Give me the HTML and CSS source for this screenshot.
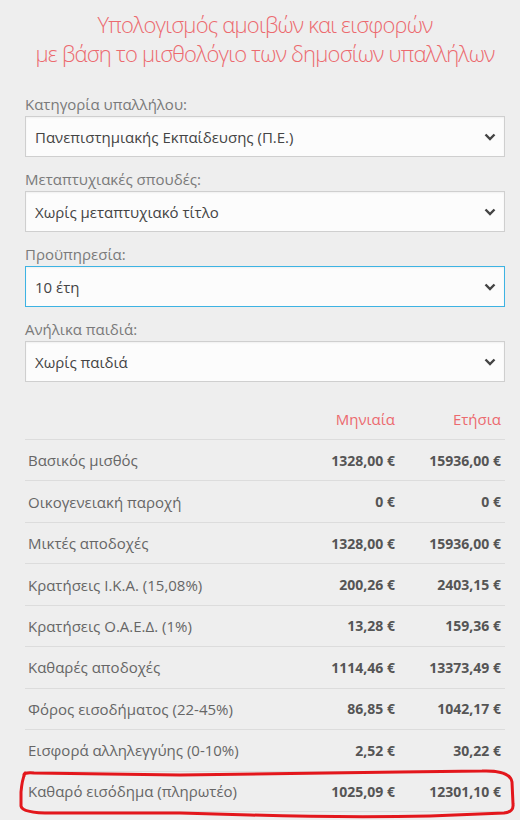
FILE: index.html
```html
<!DOCTYPE html>
<html lang="el">
<head>
<meta charset="utf-8">
<title>Υπολογισμός αμοιβών</title>
<link rel="stylesheet" href="styles.css">
</head>
<body>
<div class="page">
  <h1 class="title"><span class="tline">Υπολογισμός αμοιβών και εισφορών</span><span class="tline">με βάση το μισθολόγιο των δημοσίων υπαλλήλων</span></h1>

  <div class="field">
    <div class="label">Κατηγορία υπαλλήλου:</div>
    <div class="select"><span>Πανεπιστημιακής Εκπαίδευσης (Π.Ε.)</span><svg class="chev" viewBox="0 0 12 8" width="12" height="8"><polyline points="1.5,1.5 6,6 10.5,1.5"/></svg></div>
  </div>
  <div class="field">
    <div class="label">Μεταπτυχιακές σπουδές:</div>
    <div class="select"><span>Χωρίς μεταπτυχιακό τίτλο</span><svg class="chev" viewBox="0 0 12 8" width="12" height="8"><polyline points="1.5,1.5 6,6 10.5,1.5"/></svg></div>
  </div>
  <div class="field">
    <div class="label">Προϋπηρεσία:</div>
    <div class="select focus"><span>10 έτη</span><svg class="chev" viewBox="0 0 12 8" width="12" height="8"><polyline points="1.5,1.5 6,6 10.5,1.5"/></svg></div>
  </div>
  <div class="field">
    <div class="label">Ανήλικα παιδιά:</div>
    <div class="select"><span>Χωρίς παιδιά</span><svg class="chev" viewBox="0 0 12 8" width="12" height="8"><polyline points="1.5,1.5 6,6 10.5,1.5"/></svg></div>
  </div>

  <div class="results">
    <div class="row head"><div></div><div class="num">Μηνιαία</div><div class="num">Ετήσια</div></div>
    <div class="row"><div class="name">Βασικός μισθός</div><div class="num val">1328,00 €</div><div class="num val">15936,00 €</div></div>
    <div class="row"><div class="name">Οικογενειακή παροχή</div><div class="num val">0 €</div><div class="num val">0 €</div></div>
    <div class="row"><div class="name">Μικτές αποδοχές</div><div class="num val">1328,00 €</div><div class="num val">15936,00 €</div></div>
    <div class="row"><div class="name">Κρατήσεις Ι.Κ.Α. (15,08%)</div><div class="num val">200,26 €</div><div class="num val">2403,15 €</div></div>
    <div class="row"><div class="name">Κρατήσεις Ο.Α.Ε.Δ. (1%)</div><div class="num val">13,28 €</div><div class="num val">159,36 €</div></div>
    <div class="row"><div class="name">Καθαρές αποδοχές</div><div class="num val">1114,46 €</div><div class="num val">13373,49 €</div></div>
    <div class="row"><div class="name">Φόρος εισοδήματος (22-45%)</div><div class="num val">86,85 €</div><div class="num val">1042,17 €</div></div>
    <div class="row"><div class="name">Εισφορά αλληλεγγύης (0-10%)</div><div class="num val">2,52 €</div><div class="num val">30,22 €</div></div>
    <div class="row last"><div class="name">Καθαρό εισόδημα (πληρωτέο)</div><div class="num val">1025,09 €</div><div class="num val">12301,10 €</div></div>
  </div>
</div>
<svg class="loop" viewBox="0 0 520 820" width="520" height="820">
  <path d="M24 776 Q23 772 34 773 L180 775 Q300 773 400 772 L482 771 Q510 770 512 782 L513 804 Q514 812 504 813 L430 816 Q350 818 250 815 L180 813 L60 813 Q22 814 21 806 L21 792 Q22 780 25 773"/>
</svg>
</body>
</html>
```

FILE: styles.css
```css
html, body {
  margin: 0;
  padding: 0;
  background: #eeeeee;
}
body {
  font-family: "Open Sans", "Liberation Sans", sans-serif;
  color: #555;
  width: 520px;
  height: 820px;
  overflow: hidden;
  position: relative;
}
.page {
  padding: 10px 15px 0 25px;
}
.title {
  margin: 0 -15px 26px -15px;
  text-align: center;
  font-weight: 300;
  font-size: 22px;
  line-height: 29px;
  color: #ec6a6e;
  letter-spacing: -0.8px;
  white-space: nowrap;
}
.tline {
  display: block;
}
.field {
  margin-top: 12px;
}
.field:first-of-type {
  margin-top: 0;
}
.label {
  font-size: 15px;
  line-height: 21px;
  color: #7a7a7a;
  margin-bottom: 1px;
}
.select {
  box-sizing: border-box;
  height: 41px;
  border: 1px solid #cfcfcf;
  background: #fcfcfc;
  box-shadow: inset 0 1px 2px rgba(0, 0, 0, 0.05);
  display: flex;
  align-items: center;
  justify-content: space-between;
  padding: 0 8px 0 9px;
  font-size: 15px;
  color: #444;
}
.select.focus {
  border-color: #3db3e3;
}
.chev {
  fill: none;
  stroke: #444;
  stroke-width: 2.4;
}
.results {
  margin-top: 16px;
}
.row {
  display: grid;
  grid-template-columns: 1fr 110px 106px;
  box-sizing: border-box;
  height: 41.44px;
  align-items: center;
  border-top: 1px solid #dcdcdc;
  font-size: 15px;
}
.row.head {
  border-top: none;
  color: #ec6a6e;
  height: 41px;
}
.row.last {
  border-bottom: 1px solid #dcdcdc;
}
.name {
  padding-left: 3px;
  color: #666;
}
.num {
  text-align: right;
  padding-right: 4px;
}
.val {
  font-weight: 700;
  font-size: 14px;
  color: #555;
}
.loop {
  position: absolute;
  left: 0;
  top: 0;
  pointer-events: none;
}
.loop path {
  fill: none;
  stroke: #e3171c;
  stroke-width: 3;
  stroke-linecap: round;
  stroke-linejoin: round;
}
```
